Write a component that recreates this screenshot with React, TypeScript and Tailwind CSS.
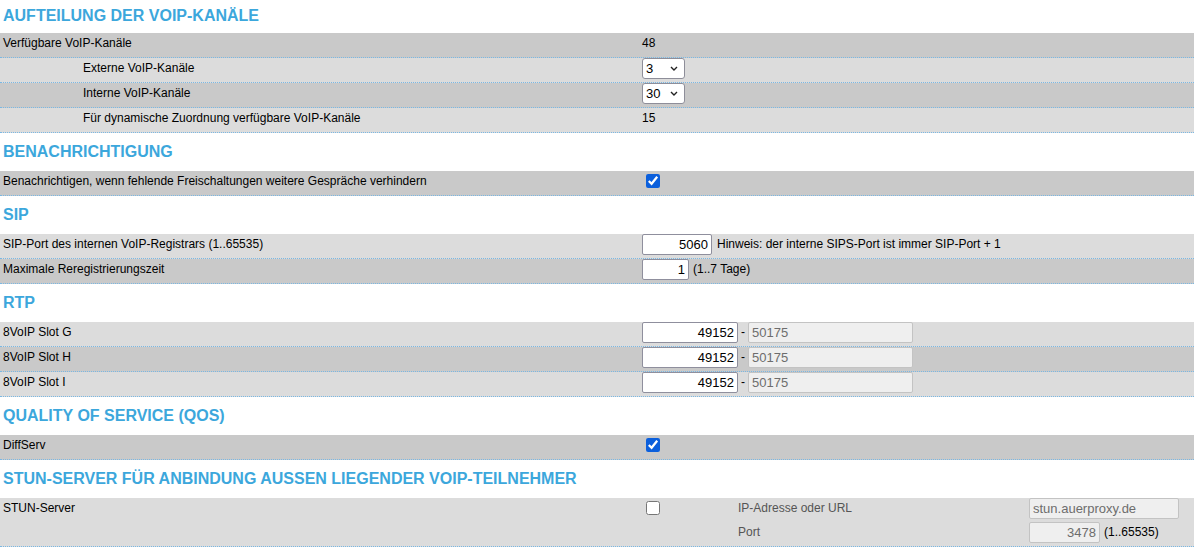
import type { ReactNode } from "react";

const DARK = "bg-[#c9c9c9]";
const LIGHT = "bg-[#dcdcdc]";

type RowProps = {
  label: string;
  sub?: boolean;
  dark?: boolean;
  children?: ReactNode;
};

const Row = ({ label, sub, dark, children }: RowProps) => (
  <div
    className={`flex h-[25px] border-b border-dotted border-[#7ab8e4] ${dark ? DARK : LIGHT}`}
  >
    <div
      className={`w-[642px] shrink-0 pt-[3px] leading-[14px] ${sub ? "pl-[83px]" : "pl-[3px]"}`}
    >
      {label}
    </div>
    <div className="flex flex-1 items-start">{children}</div>
  </div>
);

const Heading = ({ title, first }: { title: string; first?: boolean }) => (
  <h2
    className={`text-[16px] font-bold leading-[16px] uppercase text-[#3ca7dc] pl-[3px] ${first ? "h-[33px] pt-[8px]" : "h-[38px] pt-[11px]"}`}
  >
    {title}
  </h2>
);

const Text = ({ children, className = "" }: { children: ReactNode; className?: string }) => (
  <span className={`pt-[3px] leading-[14px] whitespace-nowrap ${className}`}>{children}</span>
);

const Select = ({ value, options }: { value: string; options: string[] }) => (
  <div className="relative mt-[0px] h-[21px] w-[43px]">
    <select
      defaultValue={value}
      className="h-[21px] w-[43px] appearance-none rounded-[3px] border border-[#8e8e99] bg-white pl-[3px] text-[13px] leading-[19px] text-black outline-none"
    >
      {options.map((o) => (
        <option key={o}>{o}</option>
      ))}
    </select>
    <svg
      className="pointer-events-none absolute left-[28px] top-[8px]"
      width="8"
      height="5"
      viewBox="0 0 8 5"
    >
      <path d="M1 1 L4 4 L7 1" fill="none" stroke="#222" strokeWidth="1.4" />
    </svg>
  </div>
);

const Check = ({ checked }: { checked?: boolean }) => (
  <input
    type="checkbox"
    defaultChecked={checked}
    className="ml-[4px] mt-[3px] h-[14px] w-[14px] accent-[#0b5fdc]"
  />
);

const NumInput = ({ value, w }: { value: string; w: string }) => (
  <input
    type="text"
    defaultValue={value}
    className={`h-[21px] ${w} rounded-[2px] border border-[#8f8f9d] bg-white px-[3px] text-right text-[13px] text-black outline-none`}
  />
);

const DisabledInput = ({ value, w, right }: { value: string; w: string; right?: boolean }) => (
  <input
    type="text"
    disabled
    defaultValue={value}
    className={`h-[21px] ${w} rounded-[2px] border border-[#c3c3c3] bg-[#efefef] px-[3px] text-[13px] text-[#6d6d6d] outline-none ${right ? "text-right" : "text-left"}`}
  />
);

const App = () => {
  return (
    <div className="min-h-screen bg-white font-['Liberation_Sans',Arial,sans-serif] text-[12px] text-black">
      <section>
        <Heading title="Aufteilung der VoIP-Kanäle" first />
        <Row label="Verfügbare VoIP-Kanäle" dark>
          <Text>48</Text>
        </Row>
        <Row label="Externe VoIP-Kanäle" sub>
          <Select value="3" options={["1", "2", "3", "4", "5"]} />
        </Row>
        <Row label="Interne VoIP-Kanäle" sub dark>
          <Select value="30" options={["10", "20", "30", "40"]} />
        </Row>
        <Row label="Für dynamische Zuordnung verfügbare VoIP-Kanäle" sub>
          <Text>15</Text>
        </Row>
      </section>

      <section>
        <Heading title="Benachrichtigung" />
        <Row label="Benachrichtigen, wenn fehlende Freischaltungen weitere Gespräche verhindern" dark>
          <Check checked />
        </Row>
      </section>

      <section>
        <Heading title="SIP" />
        <Row label="SIP-Port des internen VoIP-Registrars (1..65535)">
          <NumInput value="5060" w="w-[70px]" />
          <Text className="ml-[5px]">Hinweis: der interne SIPS-Port ist immer SIP-Port + 1</Text>
        </Row>
        <Row label="Maximale Reregistrierungszeit" dark>
          <NumInput value="1" w="w-[47px]" />
          <Text className="ml-[4px]">(1..7 Tage)</Text>
        </Row>
      </section>

      <section>
        <Heading title="RTP" />
        {[
          { slot: "G", dark: false },
          { slot: "H", dark: true },
          { slot: "I", dark: false },
        ].map((r) => (
          <Row key={r.slot} label={`8VoIP Slot ${r.slot}`} dark={r.dark}>
            <NumInput value="49152" w="w-[96px]" />
            <Text className="mx-[3px]">-</Text>
            <DisabledInput value="50175" w="w-[165px]" />
          </Row>
        ))}
      </section>

      <section>
        <Heading title="Quality of Service (QoS)" />
        <Row label="DiffServ" dark>
          <Check checked />
        </Row>
      </section>

      <section>
        <Heading title="STUN-Server für Anbindung außen liegender VoIP-Teilnehmer" />
        <div className={`flex h-[49px] border-b border-dotted border-[#7ab8e4] ${LIGHT}`}>
          <div className="w-[642px] shrink-0 pl-[3px] pt-[3px] leading-[14px]">STUN-Server</div>
          <div className="w-[96px] shrink-0">
            <Check />
          </div>
          <div className="flex flex-1 flex-col">
            <div className="flex h-[24px] items-start">
              <div className="w-[291px] shrink-0 pt-[3px] leading-[14px] text-[#555]">
                IP-Adresse oder URL
              </div>
              <DisabledInput value="stun.auerproxy.de" w="w-[150px]" />
            </div>
            <div className="flex h-[24px] items-start">
              <div className="w-[291px] shrink-0 pt-[3px] leading-[14px] text-[#555]">Port</div>
              <DisabledInput value="3478" w="w-[71px]" right />
              <Text className="ml-[4px]">(1..65535)</Text>
            </div>
          </div>
        </div>
      </section>
    </div>
  );
};

export default App;
